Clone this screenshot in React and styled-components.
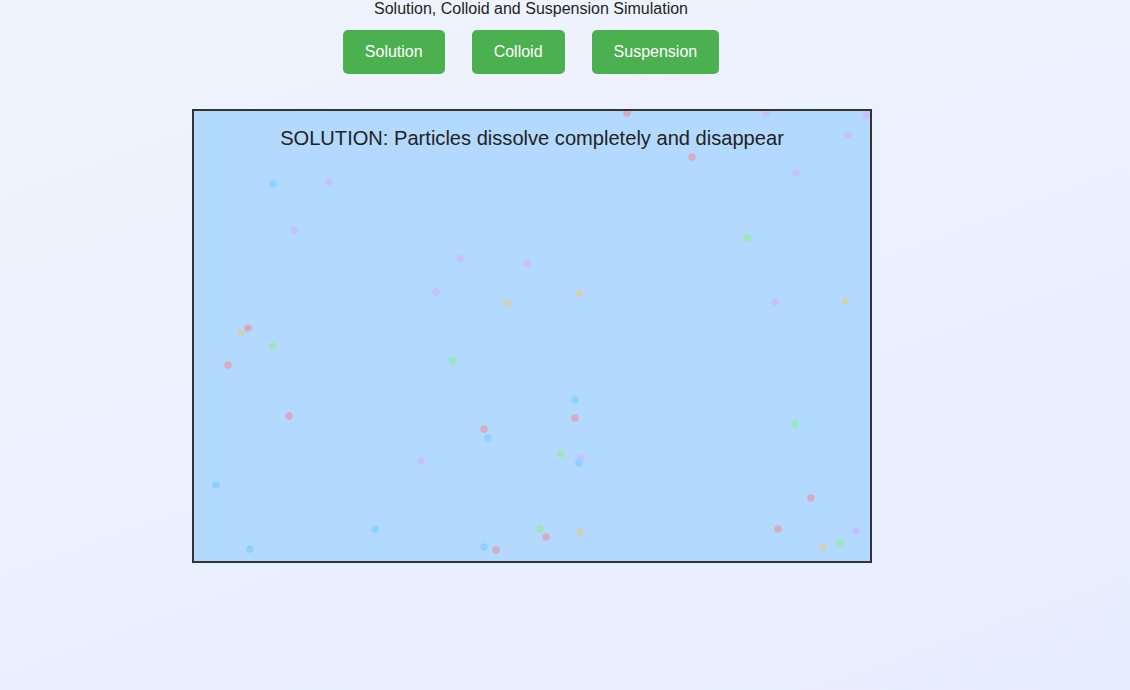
import React from "react";
import styled, { createGlobalStyle } from "styled-components";

const GlobalStyle = createGlobalStyle`
  html, body {
    margin: 0;
    min-height: 100%;
  }
  body {
    min-height: 690px;
    font-family: "Liberation Sans", Arial, sans-serif;
    background: linear-gradient(160deg, #f0f4fd 0%, #eaf0fe 55%, #e6edfe 100%);
    color: #222;
  }
`;

const Page = styled.div`
  width: 1046px;
  margin-left: 8px;
  display: flex;
  flex-direction: column;
  align-items: center;
`;

const Title = styled.h1`
  margin: 0;
  font-size: 16px;
  font-weight: normal;
  line-height: 18px;
  color: #1f1f1f;
`;

const Controls = styled.div`
  display: flex;
  gap: 27px;
  margin-top: 12px;
`;

const ModeButton = styled.button`
  height: 44px;
  padding: 0 ${(p) => p.$pad}px;
  border: none;
  border-radius: 5px;
  background: #4caf50;
  color: #fff;
  font-family: "Liberation Sans", Arial, sans-serif;
  font-size: 16px;
  cursor: pointer;
`;

const Stage = styled.div`
  margin: 35px 0 0 2px;
  width: 676px;
  height: 450px;
  border: 2px solid #333;
  background: #b3d9fe;
  position: relative;
`;

const Caption = styled.div`
  position: absolute;
  top: 16px;
  left: 0;
  right: 0;
  text-align: center;
  font-size: 20.1px;
  color: #222;
`;

const colors = {
  pink: "#d6abc4",
  purple: "#c6c0fe",
  blue: "#8fd0fe",
  green: "#9be6bb",
  yellow: "#cfd1bc",
};

// page coords of particles
const particles = [
  ["pink", 627, 113], ["purple", 766, 113], ["purple", 866, 115], ["purple", 848, 135],
  ["pink", 692, 157], ["purple", 796, 173], ["blue", 273, 184], ["purple", 329, 182],
  ["purple", 294, 230], ["green", 747, 238], ["purple", 461, 258], ["purple", 527, 263],
  ["purple", 436, 292], ["yellow", 507, 303], ["yellow", 579, 293], ["purple", 775, 302],
  ["yellow", 845, 301], ["pink", 248, 328], ["yellow", 241, 333], ["green", 273, 346],
  ["green", 453, 361], ["pink", 228, 365], ["blue", 575, 400], ["pink", 289, 416],
  ["pink", 575, 418], ["green", 795, 424], ["pink", 484, 429], ["blue", 488, 438],
  ["green", 561, 454], ["purple", 581, 458], ["blue", 579, 463], ["purple", 421, 461],
  ["blue", 216, 485], ["pink", 811, 498], ["blue", 375, 529], ["green", 540, 529],
  ["pink", 778, 529], ["yellow", 580, 532], ["purple", 856, 531], ["pink", 546, 537],
  ["green", 840, 543], ["yellow", 823, 547], ["blue", 250, 549], ["blue", 484, 547],
  ["pink", 496, 550],
];

export default function App() {
  return (
    <>
      <GlobalStyle />
      <Page>
        <Title>Solution, Colloid and Suspension Simulation</Title>
        <Controls>
          <ModeButton $pad={22}>Solution</ModeButton>
          <ModeButton $pad={22}>Colloid</ModeButton>
          <ModeButton $pad={22}>Suspension</ModeButton>
        </Controls>
        <Stage>
          <svg width="676" height="450" style={{ display: "block" }}>
            {particles.map(([c, x, y], i) => (
              <circle key={i} cx={x - 194} cy={y - 111} r="3.8" fill={colors[c]} />
            ))}
          </svg>
          <Caption>SOLUTION: Particles dissolve completely and disappear</Caption>
        </Stage>
      </Page>
    </>
  );
}
